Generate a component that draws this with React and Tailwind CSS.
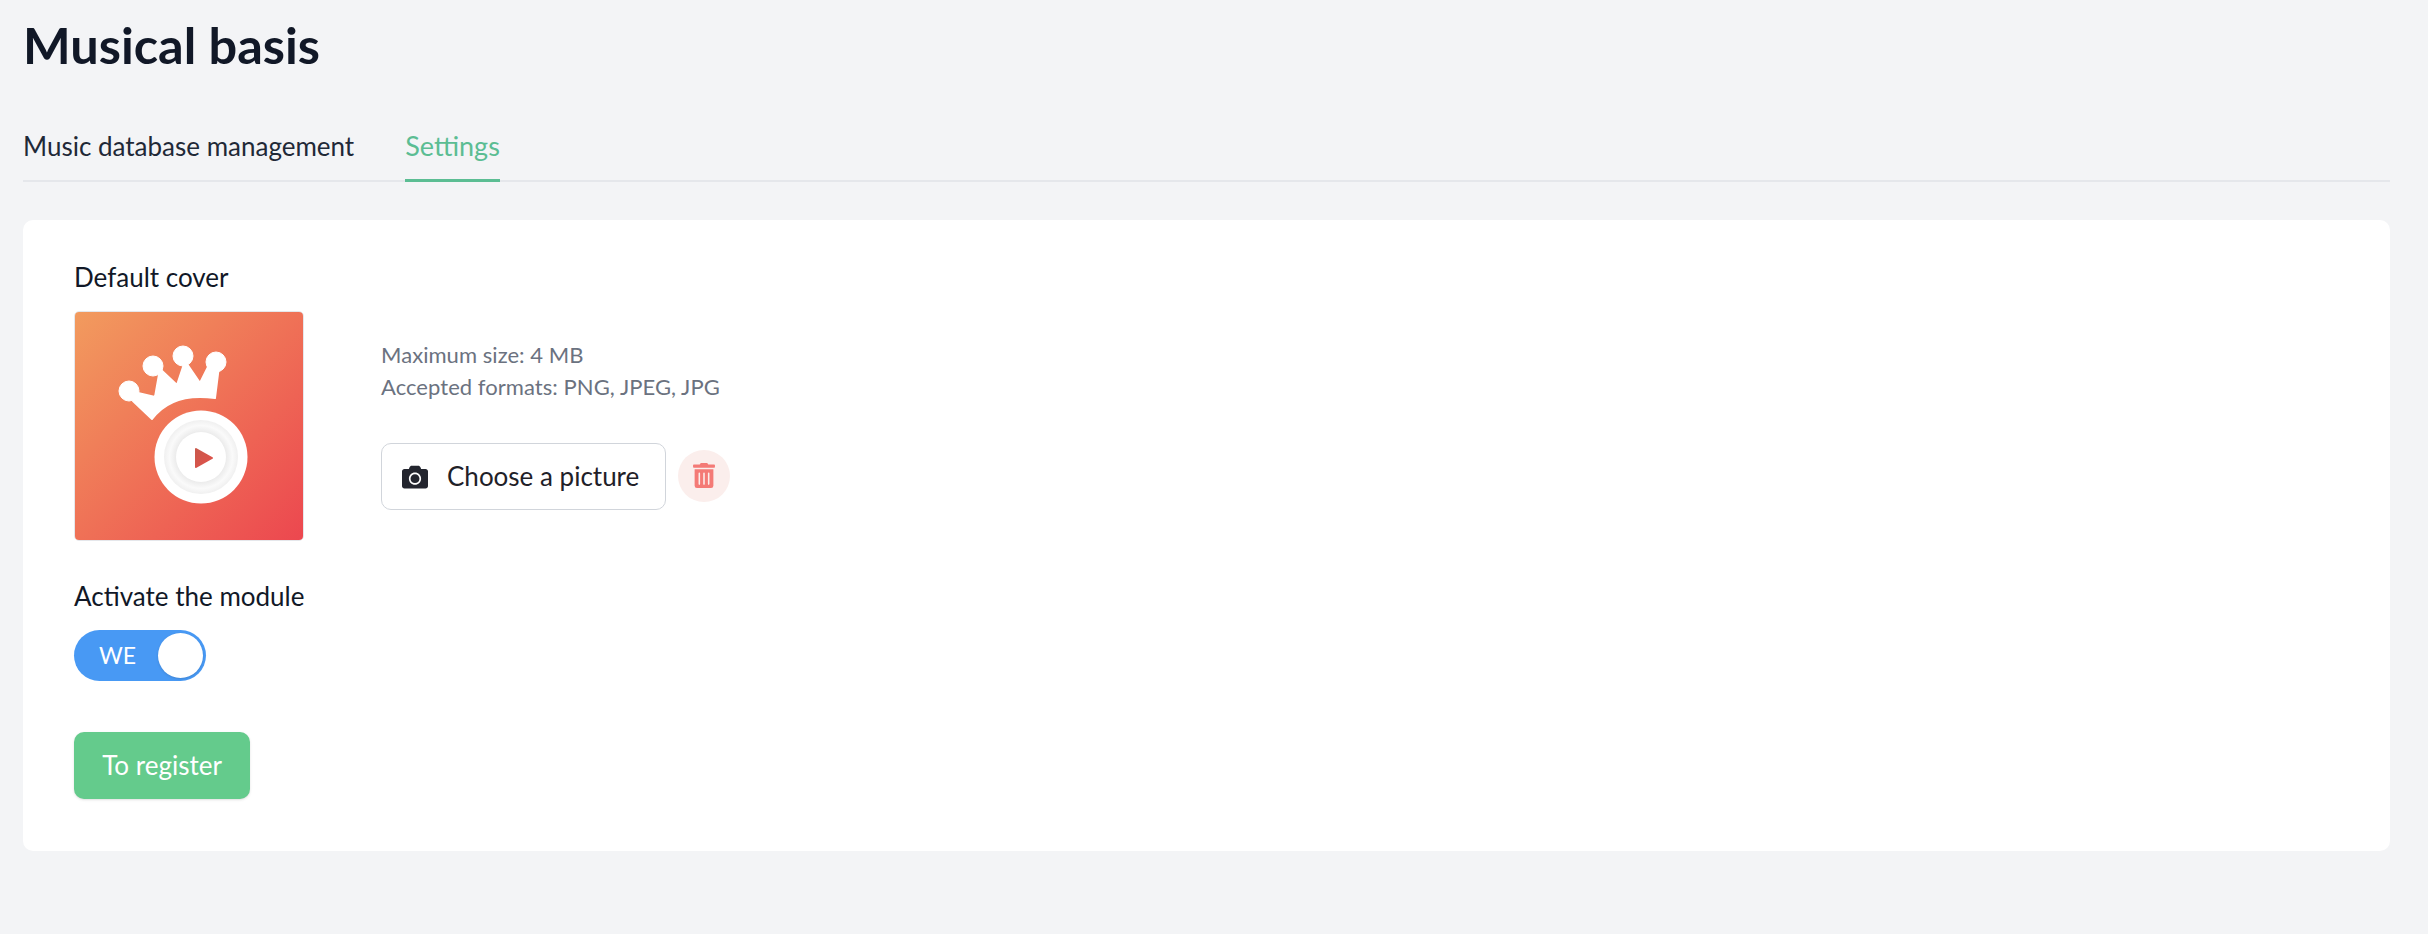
import React from "react";
import { FaCamera, FaTrashAlt } from "react-icons/fa";

function CoverArt() {
  return (
    <svg viewBox="0 0 228 228" className="h-full w-full">
      <defs>
        <linearGradient id="coverBg" x1="0" y1="0" x2="1" y2="1">
          <stop offset="0" stopColor="#f29b5e" />
          <stop offset="1" stopColor="#ec474f" />
        </linearGradient>
        <radialGradient id="ringShade">
          <stop offset="0.68" stopColor="#ececec" />
          <stop offset="0.85" stopColor="#fafafa" />
          <stop offset="1" stopColor="#f0f0f0" />
        </radialGradient>
        <linearGradient id="playFill" x1="0" y1="0" x2="1" y2="1">
          <stop offset="0" stopColor="#c9584b" />
          <stop offset="1" stopColor="#e2514a" />
        </linearGradient>
      </defs>
      <rect width="228" height="228" fill="url(#coverBg)" />
      <g fill="#fff" stroke="#fff" strokeLinejoin="round">
        <circle cx="54" cy="79" r="10" />
        <circle cx="78" cy="54" r="10" />
        <circle cx="108" cy="44" r="10" />
        <circle cx="141" cy="50" r="10" />
        <path
          strokeWidth="2"
          d="M58 89 L77 107 Q97 80 140 86 L144 54 L133 55 L125 71 L110 49 L102 73 L85 57 L80 85 L63 81 Z"
        />
      </g>
      <circle cx="126" cy="145" r="46.5" fill="#fff" />
      <circle cx="126" cy="145" r="37" fill="url(#ringShade)" />
      <circle cx="126" cy="145" r="25" fill="#fff" />
      <path
        d="M121 137 L137 146 L121 155 Z"
        fill="url(#playFill)"
        stroke="url(#playFill)"
        strokeWidth="2"
        strokeLinejoin="round"
      />
    </svg>
  );
}

export default function App() {
  return (
    <div
      className="min-h-[934px] bg-[#f3f4f6] pl-[23px] pt-[20px] text-[#111827]"
      style={{ fontFamily: '"Lato", "Noto Sans", sans-serif' }}
    >
      <div className="w-[2367px]">
        <h1 className="text-[50.5px] font-bold leading-[50px]">Musical basis</h1>

        {/* tabs */}
        <div className="mt-[55px] flex h-[57px] gap-[51px] border-b-2 border-[#e5e7eb]">
          <div className="h-[57px] pt-[3px] text-[26px] leading-[36px] text-[#1f2937]">Music database management</div>
          <div className="h-[57px] border-b-[3px] border-[#5bbd93] pt-[3px] text-[27px] leading-[36px] text-[#5bbd93]">Settings</div>
        </div>

        {/* card */}
        <div className="mt-[38px] h-[631px] rounded-[10px] bg-white pl-[51px] pt-[40px]">
          <div className="text-[26px] leading-[34px]">Default cover</div>
          <div className="mt-[17px] flex items-start">
            <div className="h-[230px] w-[230px] overflow-hidden rounded-[5px] border border-[#e5e7eb]">
              <CoverArt />
            </div>
            <div className="ml-[77px] pt-[28px]">
              <div className="text-[22px] leading-[32px] tracking-[0.05px] text-[#6b7280]">
                <div>Maximum size: 4 MB</div>
                <div>Accepted formats: PNG, JPEG, JPG</div>
              </div>
              <div className="mt-[40px] flex items-center gap-[12px]">
                <div className="flex h-[67px] w-[285px] items-center rounded-[10px] border border-[#d1d5db] pl-[20px] text-[26px] text-[#1f2128]">
                  <FaCamera className="h-[26px] w-[26px] text-[#23252e]" />
                  <span className="ml-[19px]">Choose a picture</span>
                </div>
                <div className="mb-[2px] flex h-[52px] w-[52px] items-center justify-center rounded-full bg-[#fbeeec]">
                  <FaTrashAlt className="h-[25px] w-[22px] text-[#f47a76]" />
                </div>
              </div>
            </div>
          </div>

          <div className="mt-[38px] text-[26px] leading-[34px]">Activate the module</div>
          <div className="relative mt-[17px] flex h-[51px] w-[132px] items-center rounded-full bg-[#4899f4] pl-[25px] text-[23px] text-white">
            WE
            <div className="absolute right-[3px] top-[3px] h-[45px] w-[45px] rounded-full bg-white shadow-sm" />
          </div>

          <div className="mt-[51px] flex h-[67px] w-[176px] items-center justify-center rounded-[10px] bg-[#64cb8c] text-[26px] text-white shadow-sm">
            To register
          </div>
        </div>
      </div>
    </div>
  );
}
